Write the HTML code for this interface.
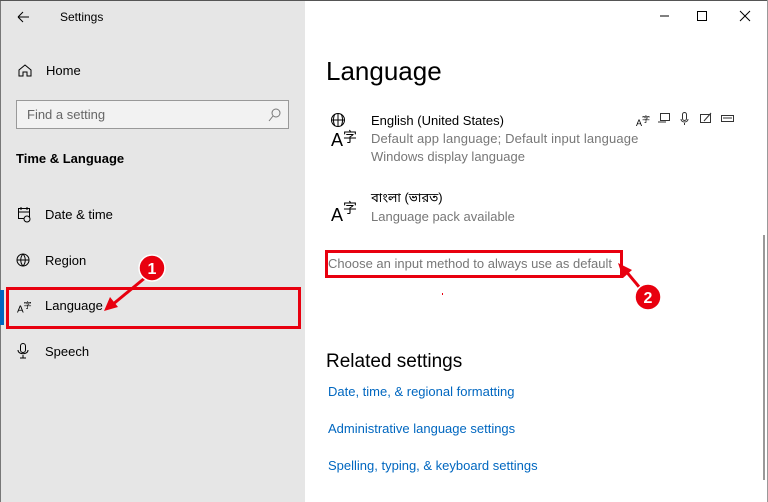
<!DOCTYPE html>
<html><head><meta charset="utf-8"><style>
body{margin:0;width:768px;height:502px;overflow:hidden;font-family:"Liberation Sans","Noto Sans CJK SC",sans-serif;background:#fff;position:relative}
.side{position:absolute;left:0;top:0;width:305px;height:502px;background:#e6e6e6;border-left:1px solid #777;box-sizing:border-box}
.t{position:absolute;white-space:nowrap}
.s{font-size:13px;color:#000}
.g{color:#777;font-size:13px}
.l{color:#0067c0;font-size:13px}
</style></head><body>
<div class="side"></div>
<div style="position:absolute;left:0;top:0;width:768px;height:1px;background:#555"></div>
<div style="position:absolute;left:767px;top:0;width:1px;height:502px;background:#999"></div>
<div class="t" style="left:60px;top:10px;font-size:12px">Settings</div>
<div class="t s" style="left:46px;top:63px">Home</div>
<div style="position:absolute;left:16px;top:100px;width:273px;height:29px;border:1px solid #999;background:#f2f2f2;box-sizing:border-box"></div>
<div class="t" style="left:27px;top:107px;font-size:13px;color:#666">Find a setting</div>
<div class="t" style="left:16px;top:151px;font-size:13px;font-weight:bold">Time &amp; Language</div>
<div class="t s" style="left:45px;top:207px">Date &amp; time</div>
<div class="t s" style="left:45px;top:253px">Region</div>
<div style="position:absolute;left:0;top:290px;width:4px;height:35px;background:#0067c0"></div>
<div class="t" style="left:17px;top:300px;font-size:10px">A<sup style="font-size:8px">字</sup></div>
<div class="t s" style="left:45px;top:298px">Language</div>
<div style="position:absolute;left:6px;top:287px;width:295px;height:42px;border:3px solid #e8000f;box-sizing:border-box"></div>
<div class="t s" style="left:45px;top:344px">Speech</div>
<svg style="position:absolute;left:0;top:0" width="768" height="502" fill="none" stroke="#000" stroke-width="1">
<path d="M29 17H18M18 17l5-5M18 17l5 5"/>
<path d="M19 76v-6l6-5 6 5v6h-4v-4h-4v4z"/>
<circle cx="276" cy="113" r="4" stroke="#777"/><path d="M273 116l-4 5" stroke="#777"/>
<rect x="18.5" y="208.5" width="11" height="10"/><path d="M18 212h12M21 207v3M27 207v3"/><circle cx="27" cy="219" r="3" fill="#e6e6e6"/>
<circle cx="23" cy="260" r="6"/><path d="M17 260h12M23 254c-3 3-3 9 0 12M23 254c3 3 3 9 0 12"/>
<rect x="20.5" y="343.5" width="5" height="9" rx="2.5"/><path d="M18 350c0 5 10 5 10 0M23 355v3M20 358h6"/>
<circle cx="338" cy="120" r="6.5"/><path d="M331.5 120h13M338 113.5v13M335 114c-2 3-2 9 0 12M341 114c2 3 2 9 0 12"/>
<g stroke="#e8000f" stroke-width="3"><line x1="146" y1="277" x2="112" y2="305"/></g>
<polygon points="104,311 110,297 118,307" fill="#e8000f" stroke="none"/>
<circle cx="152" cy="268" r="13" fill="#e8000f" stroke="#fff" stroke-width="1.5"/>
<text x="152" y="274" font-size="16" font-weight="bold" fill="#fff" stroke="none" text-anchor="middle" font-family="Liberation Sans">1</text>
<line x1="645" y1="294" x2="625" y2="270" stroke="#e8000f" stroke-width="3"/>
<polygon points="618,263 632,270 623,278" fill="#e8000f" stroke="none"/>
<circle cx="648" cy="297" r="13" fill="#e8000f" stroke="#fff" stroke-width="1.5"/>
<text x="648" y="303" font-size="16" font-weight="bold" fill="#fff" stroke="none" text-anchor="middle" font-family="Liberation Sans">2</text>
<line x1="660" y1="16" x2="669" y2="16"/>
<rect x="697.5" y="11.5" width="9" height="9"/>
<path d="M740 11L750 21M750 11L740 21"/>
<rect x="763" y="235" width="2" height="245" fill="#999" stroke="none"/>
<rect x="442" y="293" width="1" height="2" fill="#e8000f" stroke="none"/>
<g stroke="#333">
<rect x="660.5" y="113.5" width="9" height="7"/><path d="M658 122h8"/>
<rect x="682.5" y="112.5" width="4" height="8" rx="2"/><path d="M681 119c0 4 7 4 7 0M684.5 123v2"/>
<rect x="700.5" y="114.5" width="10" height="8"/><path d="M704 121l7-8"/>
<rect x="721.5" y="115.5" width="12" height="6"/><path d="M723 118h9"/>
</g>
</svg>
<div class="t" style="left:636px;top:114px;font-size:9px">A<sup style="font-size:8px">字</sup></div>
<div class="t" style="left:326px;top:56px;font-size:26px">Language</div>
<div class="t" style="left:331px;top:127px;font-size:18px">A<span style="font-size:14px;vertical-align:4px">字</span></div>
<div class="t s" style="left:371px;top:113px">English (United States)</div>
<div class="t g" style="left:371px;top:131px;letter-spacing:0.15px">Default app language; Default input language</div>
<div class="t g" style="left:371px;top:149px">Windows display language</div>
<div class="t" style="left:331px;top:198px;font-size:18px">A<span style="font-size:14px;vertical-align:8px">字</span></div>
<div class="t s" style="left:371px;top:190px;font-family:'Liberation Sans','Noto Sans Bengali',sans-serif">বাংলা (ভারত)</div>
<div class="t g" style="left:371px;top:209px">Language pack available</div>
<div class="t g" style="left:328px;top:256px">Choose an input method to always use as default</div>
<div style="position:absolute;left:325px;top:250px;width:298px;height:28px;border:3px solid #e8000f;box-sizing:border-box"></div>
<div class="t" style="left:326px;top:351px;font-size:19px">Related settings</div>
<div class="t l" style="left:328px;top:384px">Date, time, &amp; regional formatting</div>
<div class="t l" style="left:328px;top:421px">Administrative language settings</div>
<div class="t l" style="left:328px;top:458px">Spelling, typing, &amp; keyboard settings</div>
</body></html>
